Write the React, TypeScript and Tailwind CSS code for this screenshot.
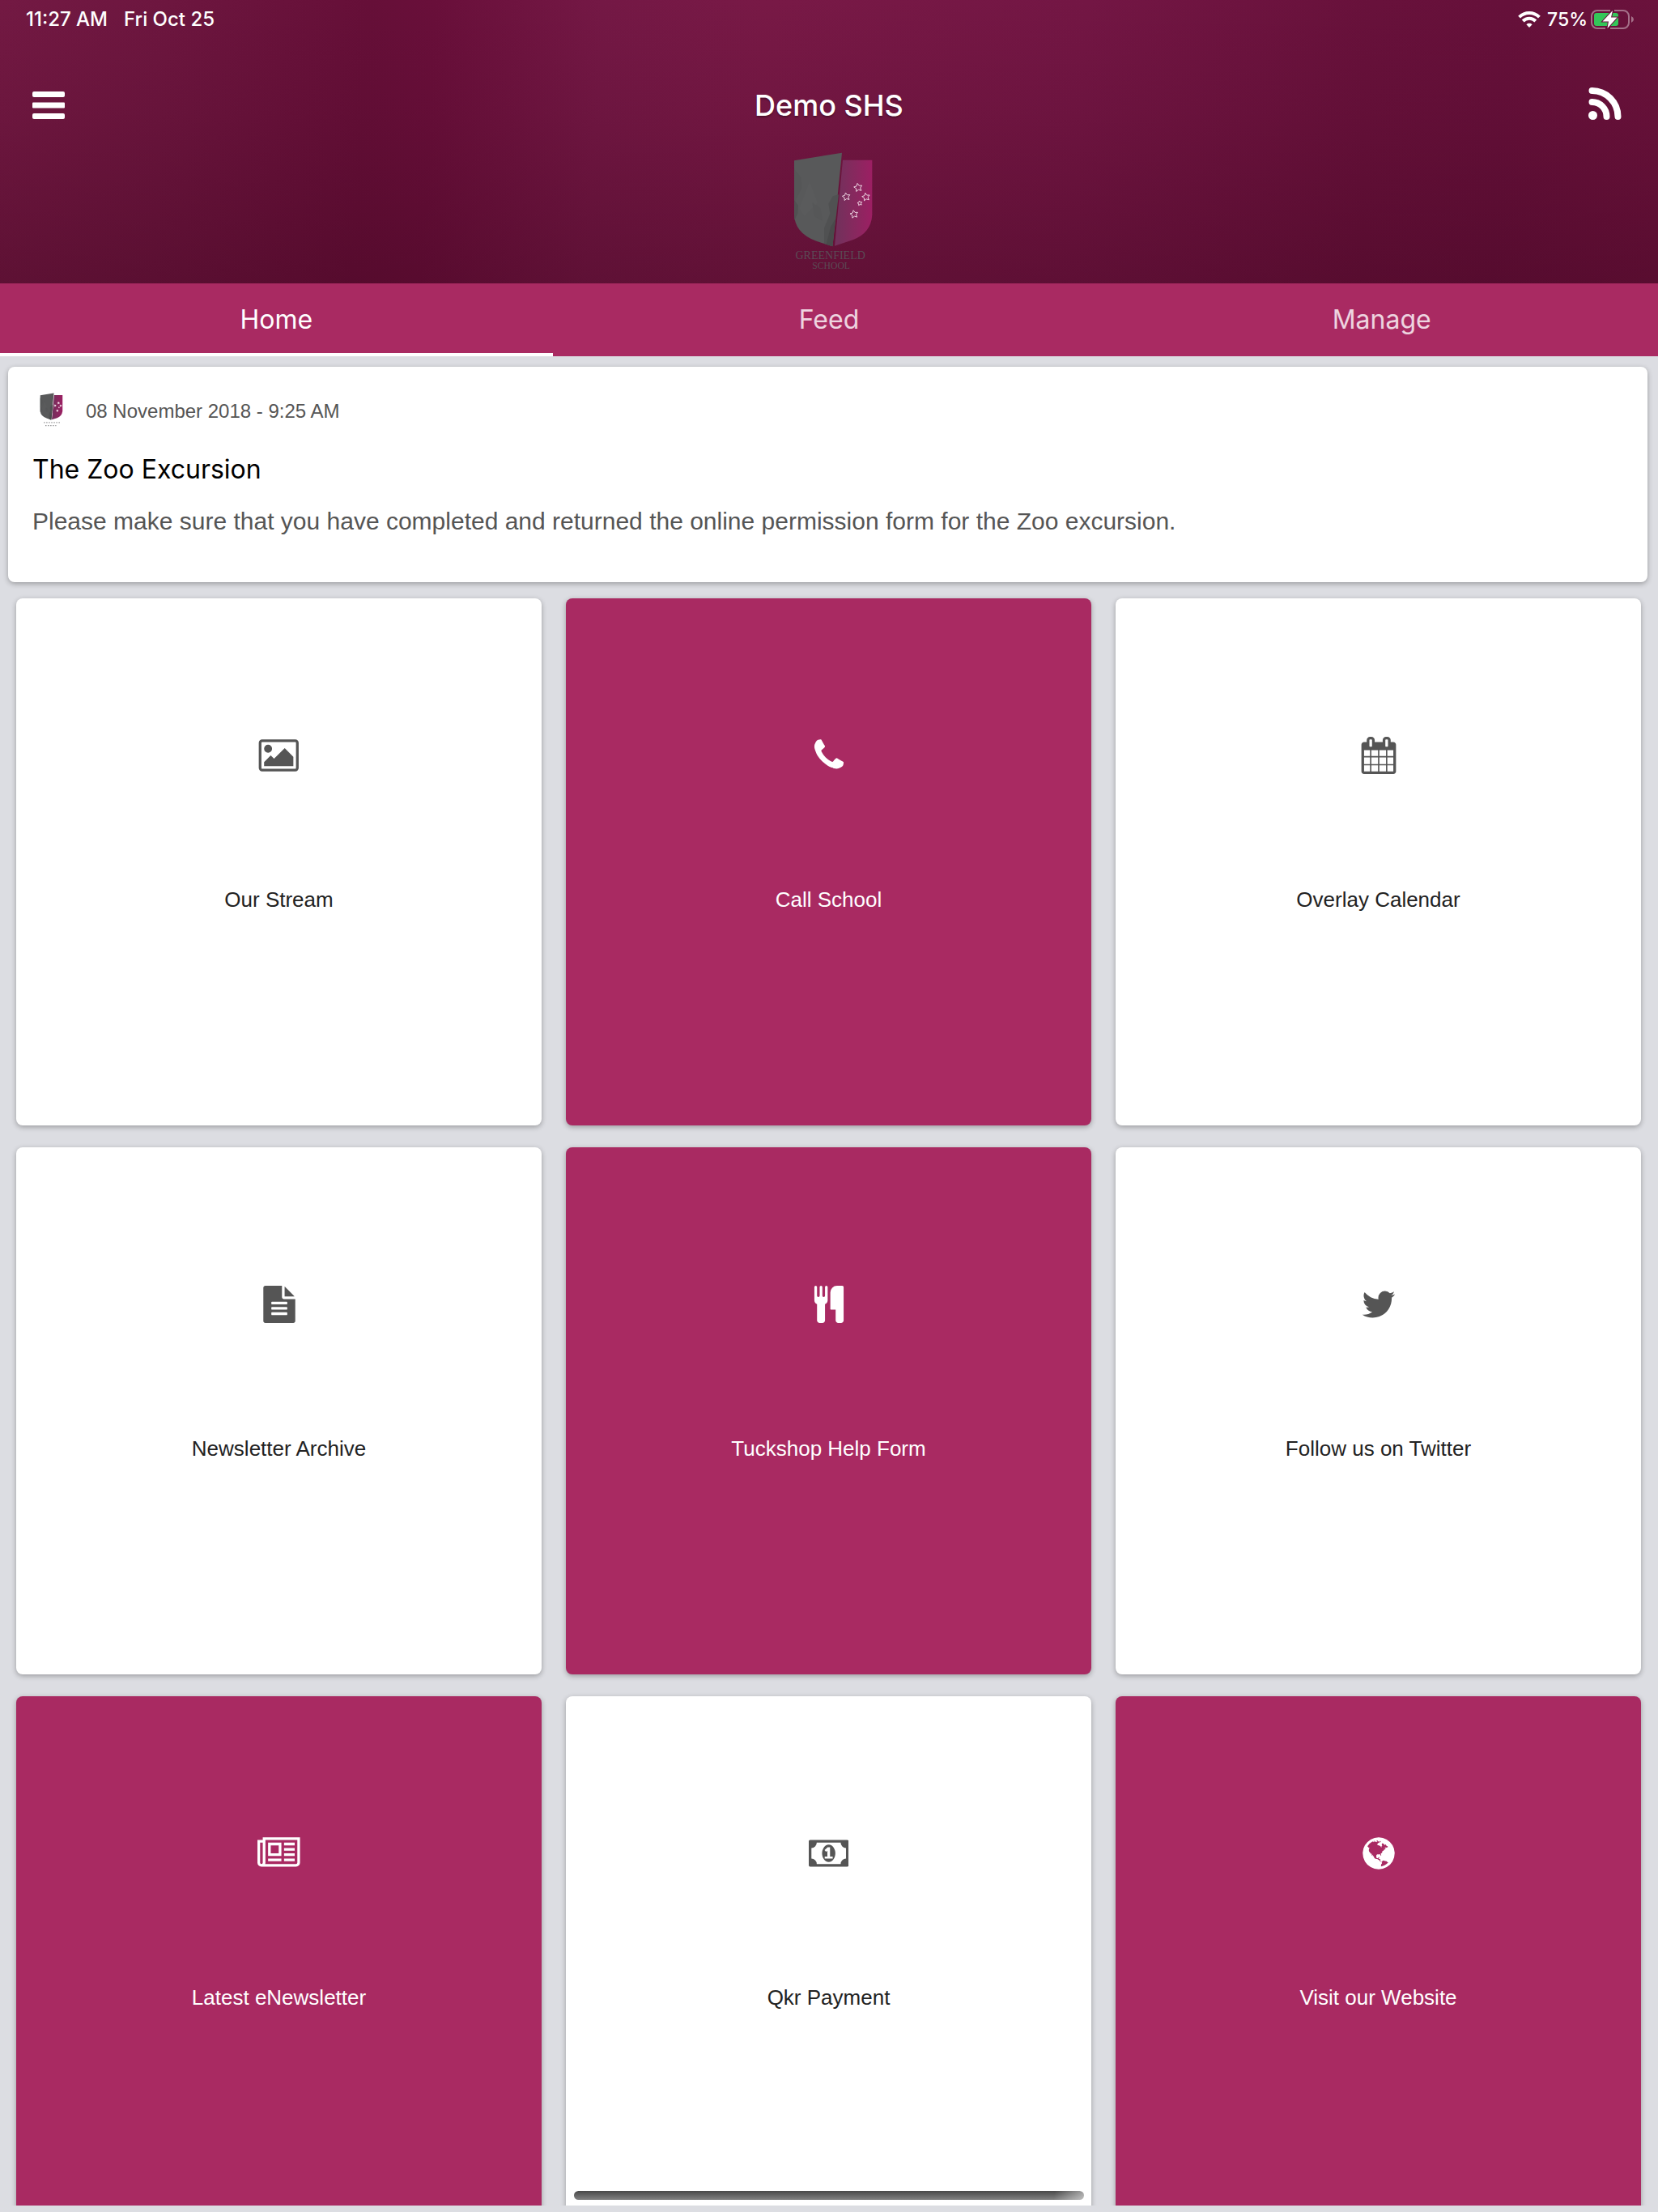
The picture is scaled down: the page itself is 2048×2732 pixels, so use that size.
import React from 'react';
import clsx from 'clsx';

type IconProps = {
  width: number;
  d: string;
};

type Tile = {
  label: string;
  icon: IconProps;
  accent?: boolean;
};

const icons: Record<string, IconProps> = {
  picture: {
    width: 2048,
    d: 'M704 576q0 80-56 136t-136 56-136-56-56-136 56-136 136-56 136 56 56 136zm1024 384v448h-1408v-192l320-320 160 160 512-512zm96-704h-1600q-13 0-22.5 9.5t-9.5 22.5v1216q0 13 9.5 22.5t22.5 9.5h1600q13 0 22.5-9.5t9.5-22.5v-1216q0-13-9.5-22.5t-22.5-9.5zm160 32v1216q0 66-47 113t-113 47h-1600q-66 0-113-47t-47-113v-1216q0-66 47-113t113-47h1600q66 0 113 47t47 113z',
  },
  phone: {
    width: 1792,
    d: 'M1600 1240q0 27-10 70.5t-21 68.5q-21 50-122 106-94 51-186 51-27 0-53-3.5t-57.5-12.5-47-14.5-55.5-20.5-49-18q-98-35-175-83-127-79-264-216t-216-264q-48-77-83-175-3-9-18-49t-20.5-55.5-14.5-47-12.5-57.5-3.5-53q0-92 51-186 56-101 106-122 25-11 68.5-21t70.5-10q14 0 21 3 18 6 53 76 11 19 30 54t35 63.5 31 53.5q3 4 17.5 25t21.5 35.5 7 28.5q0 20-28.5 50t-62 55-62 53-28.5 46q0 9 5 22.5t8.5 20.5 14 24 11.5 19q76 137 174 235t235 174q2 1 19 11.5t24 14 20.5 8.5 22.5 5q18 0 46-28.5t53-62 55-62 50-28.5q14 0 28.5 7t35.5 21.5 25 17.5q25 15 53.5 31t63.5 35 54 30q70 35 76 53 3 7 3 21z',
  },
  calendar: {
    width: 1792,
    d: 'M192 1664h288v-288h-288v288zm352 0h320v-288h-320v288zm-352-352h288v-320h-288v320zm352 0h320v-320h-320v320zm-352-384h288v-288h-288v288zm736 736h320v-288h-320v288zm-384-736h320v-288h-320v288zm768 736h288v-288h-288v288zm-384-352h320v-320h-320v320zm-352-864v-288q0-13-9.5-22.5t-22.5-9.5h-64q-13 0-22.5 9.5t-9.5 22.5v288q0 13 9.5 22.5t22.5 9.5h64q13 0 22.5-9.5t9.5-22.5zm736 864h288v-320h-288v320zm-384-384h320v-288h-320v288zm384 0h288v-288h-288v288zm32-480v-288q0-13-9.5-22.5t-22.5-9.5h-64q-13 0-22.5 9.5t-9.5 22.5v288q0 13 9.5 22.5t22.5 9.5h64q13 0 22.5-9.5t9.5-22.5zm384-64v1280q0 52-38 90t-90 38h-1408q-52 0-90-38t-38-90v-1280q0-52 38-90t90-38h128v-96q0-66 47-113t113-47h64q66 0 113 47t47 113v96h384v-96q0-66 47-113t113-47h64q66 0 113 47t47 113v96h128q52 0 90 38t38 90z',
  },
  file: {
    width: 1792,
    d: 'M1596 476q14 14 28 36h-472v-472q22 14 36 28zm-476 164h544v1056q0 40-28 68t-68 28h-1344q-40 0-68-28t-28-68v-1600q0-40 28-68t68-28h800v544q0 40 28 68t68 28zm160 736v-64q0-14-9-23t-23-9h-704q-14 0-23 9t-9 23v64q0 14 9 23t23 9h704q14 0 23-9t9-23zm0-256v-64q0-14-9-23t-23-9h-704q-14 0-23 9t-9 23v64q0 14 9 23t23 9h704q14 0 23-9t9-23zm0-256v-64q0-14-9-23t-23-9h-704q-14 0-23 9t-9 23v64q0 14 9 23t23 9h704q14 0 23-9t9-23z',
  },
  cutlery: {
    width: 1792,
    d: 'M832 64v640q0 61-35.5 111t-92.5 70v779q0 52-38 90t-90 38h-128q-52 0-90-38t-38-90v-779q-57-20-92.5-70t-35.5-111v-640q0-26 19-45t45-19 45 19 19 45v416q0 26 19 45t45 19 45-19 19-45v-416q0-26 19-45t45-19 45 19 19 45v416q0 26 19 45t45 19 45-19 19-45v-416q0-26 19-45t45-19 45 19 19 45zm768 0v1600q0 52-38 90t-90 38h-128q-52 0-90-38t-38-90v-512h-224q-13 0-22.5-9.5t-9.5-22.5v-800q0-132 94-226t226-94h256q26 0 45 19t19 45z',
  },
  twitter: {
    width: 1792,
    d: 'M1684 408q-67 98-162 167 1 14 1 42 0 130-38 259.5t-115.5 248.5-184.5 210.5-258 146-323 54.5q-271 0-496-145 35 4 78 4 225 0 401-138-105-2-188-64.5t-114-159.5q33 5 61 5 43 0 85-11-112-23-185.5-111.5t-73.5-205.5v-4q68 38 146 41-66-44-105-115t-39-154q0-88 44-163 121 149 294.5 238.5t371.5 99.5q-8-38-8-74 0-134 94.5-228.5t228.5-94.5q140 0 236 102 109-21 205-78-37 115-142 178 93-10 186-50z',
  },
  newspaper: {
    width: 2048,
    d: 'M1024 512h-384v384h384v-384zm128 640v128h-640v-128h640zm0-768v640h-640v-640h640zm640 768v128h-512v-128h512zm0-256v128h-512v-128h512zm0-256v128h-512v-128h512zm0-256v128h-512v-128h512zm-1536 960v-960h-128v960q0 26 19 45t45 19 45-19 19-45zm1664 0v-1088h-1536v1088q0 33-11 64h1483q26 0 45-19t19-45zm128-1216v1216q0 80-56 136t-136 56h-1664q-80 0-136-56t-56-136v-1088h256v-128h1792z',
  },
  money: {
    width: 1920,
    d: 'M768 1152h384v-96h-128v-448h-114l-148 137 77 80q42-37 55-57h2v288h-128v96zm512-256q0 70-21 142t-59.5 134-101.5 101-138 39-138-39-101.5-101-59.5-134-21-142 21-142 59.5-134 101.5-101 138-39 138 39 101.5 101 59.5 134 21 142zm512 256v-512q-106 0-181-75t-75-181h-1152q0 106-75 181t-181 75v512q106 0 181 75t75 181h1152q0-106 75-181t181-75zm128-832v1152q0 26-19 45t-45 19h-1792q-26 0-45-19t-19-45v-1152q0-26 19-45t45-19h1792q26 0 45 19t19 45z',
  },
  globe: {
    width: 1792,
    d: 'M896 128q209 0 385.5 103t279.5 279.5 103 385.5-103 385.5-279.5 279.5-385.5 103-385.5-103-279.5-279.5-103-385.5 103-385.5 279.5-279.5 385.5-103zm274 521q-2 1-9.5 9.5t-13.5 9.5q2 0 4.5-5t5-11 3.5-7q6-7 22-15 14-6 52-12 34-8 51 11-2-2 9.5-13t14.5-12q3-2 15-4.5t15-7.5l2-22q-12 1-17.5-7t-6.5-21q0 2-6 8 0-7-4.5-8t-11.5 1-9 1q-10-3-15-7.5t-8-16.5-4-15q-2-5-9.5-11t-9.5-10q-1-2-2.5-5.5t-3-6.5-4-5.5-5.5-2.5-7 5-7.5 10-4.5 5q-3-2-6-1.5t-4.5 1-4.5 3-5 3.5q-3 2-8.5 3t-8.5 2q15-5-1-11-10-4-16-3 9-4 7.5-12t-8.5-14h5q-1-4-8.5-8.5t-17.5-8.5-13-6q-8-5-34-9.5t-33-.5q-5 6-4.5 10.5t4 14 3.5 12.5q1 6-5.5 13t-6.5 12q0 7 14 15.5t10 21.5q-3 8-16 16t-16 12q-5 8-1.5 18.5t10.5 16.5q2 2 1.5 4t-3.5 4.5-5.5 4-6.5 3.5l-3 2q-11 5-20.5-6t-13.5-26q-7-25-16-30-23-8-29 1-5-13-41-26-25-9-58-4 6-1 0-15-7-15-19-12 3-6 4-17.5t1-13.5q3-13 12-23 1-1 7-8.5t9.5-13.5.5-6q35 4 50-11 5-5 11.5-17t10.5-17q9-6 14-5.5t14.5 5.5 14.5 5q14 1 15.5-11t-7.5-20q12 1 3-17-4-7-8-9-12-4-27 5-8 4 2 8-1-1-9.5 10.5t-16.5 17.5-16-5q-1-1-5.5-13.5t-9.5-13.5q-8 0-16 15 3-8-11-15t-24-8q19-12-8-27-7-4-20.5-5t-19.5 4q-5 7-5.5 11.5t5 8 10.5 5.5 11.5 4 8.5 3q14 10 8 14-2 1-8.5 3.5t-11.5 4.5-6 4q-3 4 0 14t-2 14q-5-5-9-17.5t-7-16.5q7 9-25 6l-10-1q-4 0-16 2t-20.5 1-13.5-8q-4-8 0-20 1-4 4-2-4-3-11-9.5t-10-8.5q-46 15-94 41 6 1 12-1 5-2 13-6.5t10-5.5q34-14 42-7l5-5q14 16 20 25-7-4-30-1-20 6-22 12 7 12 5 18-4-3-11.5-10t-14.5-11-15-5q-16 0-22 1-146 80-235 222 7 7 12 8 4 1 5 9t2.5 11 11.5-3q9 8 3 19 1-1 44 27 19 17 21 21 3 11-10 18-1-2-9-9t-9-4q-3 5 .5 18.5t10.5 12.5q-7 0-9.5 16t-2.5 35.5-1 23.5l2 1q-3 12 5.5 34.5t21.5 19.5q-13 3 20 43 6 8 8 9 3 2 12 7.5t15 10 10 10.5q4 5 10 22.5t14 23.5q-2 6 9.500 20t10.500 23q-1 0-2.500 1t-2.500 1q3 7 15.500 14t15.500 13q1 3 2 10t3 11 8 2q2-20-24-62-15-25-17-29-3-5-5.500-15.500t-4.500-14.500q2 0 6 1.500t8.500 3.500 7.500 4 2 3q-3 7 2 17.500t12 18.500 17 19 12 13q6 6 14 19.500t0 13.500q9 0 20 10.500t17 19.500q5 8 8 26t5 24q2 7 8.500 13.500t12.500 9.500l16 8 13 7q5 2 18.500 10.500t21.500 11.500q10 4 16 4t14.500-2.500 13.500-3.500q15-2 29 15t21 21q36 19 55 11-2 1 .5 7.500t8 15.500 9 14.500 5.500 8.500q5 6 18 15t18 15q6-4 7-9-3 8 7 20t18 10q14-3 14-32-31 15-49-18 0-1-2.500-5.500t-4-8.500-2.500-8.500 0-7.500 5-3q9 0 10-3.500t-2-12.500-4-13q-1-8-11-20t-12-15q-5 9-16 8t-16-9q0 1-1.500 5.500t-1.500 6.500q-13 0-15-1 1-3 2.500-17.500t3.500-22.500q1-4 5.500-12t7.500-14.500 4-12.500-4.500-9.500-17.500-2.500q-19 1-26 20-1 3-3 10.500t-5 11.500-9 7q-7 3-24 2t-24-5q-13-8-22.500-29t-9.500-37q0-10 2.500-26.500t3-25-5.500-24.500q3-2 9-9.500t10-10.500q2-1 4.500-1.500t4.500 0 4-1.500 3-6q-1-1-4-3-3-3-4-3 7 3 28.500-1.500t27.500 1.500q15 11 22-2 0-1-2.500-9.500t-.5-13.500q5 27 29 9 3 3 15.500 5t17.500 5q3 2 7 5.500t5.500 4.500 5-.5 8.500-6.500q10 14 12 24 11 40 19 44 7 3 11 2t4.500-9.500 0-14-1.500-12.500l-1-8v-18l-1-8q-15-3-18.500-12t1.500-18.500 15-18.500q1-1 8-3.500t15.500-6.500 12.500-8q21-19 15-35 7 0 11-9-1 0-5-3t-7.500-5-4.500-2q9-5 2-16 5-3 7.500-11t7.500-10q9 12 21 2 7-8 1-16 5-7 20.500-10.500t18.500-9.500q7 2 8-2t1-12 3-12q4-5 15-9t13-5l17-11q3-4 0-4 18 2 31-11 10-11-6-20 3-6-3-9.500t-15-5.500q3-1 11.500-.5t10.500-1.500q15-10-7-16-17-5-43 12zm-163 877q206-36 351-189-3-3-12.500-4.500t-12.500-3.500q-18-7-24-8 1-7-2.500-13t-8-9-12.500-8-11-7q-2-2-7-6t-7-5.500-7.500-4.500-8.500-2-10 1l-3 1q-3 1-5.500 2.500t-5.500 3-4 3 0 2.500q-21-17-36-22-5-1-11-5.500t-10.500-7-10-1.500-11.500 7q-5 5-6 15t-2 13q-7-5 0-17.500t2-18.500q-3-6-10.500-4.500t-12 4.500-11.500 8.500-9 6.500-8.500 5.500-8.500 7.500q-3 4-6 12t-5 11q-2-4-11.500-6.500t-9.500-5.500q2 10 4 35t5 38q7 31-12 48-27 25-29 40-4 22 12 26 0 7-8 20.500t-7 21.500q0 6 2 16z',
  },
};

const tabs = ['Home', 'Feed', 'Manage'];

const tiles: Tile[] = [
  { label: 'Our Stream', icon: icons.picture },
  { label: 'Call School', icon: icons.phone, accent: true },
  { label: 'Overlay Calendar', icon: icons.calendar },
  { label: 'Newsletter Archive', icon: icons.file },
  { label: 'Tuckshop Help Form', icon: icons.cutlery, accent: true },
  { label: 'Follow us on Twitter', icon: icons.twitter },
  { label: 'Latest eNewsletter', icon: icons.newspaper, accent: true },
  { label: 'Qkr Payment', icon: icons.money },
  { label: 'Visit our Website', icon: icons.globe, accent: true },
];

const TileIcon = ({ width, d }: IconProps) => (
  <svg viewBox={`0 0 ${width} 1792`} className="h-[46px] w-auto" fill="currentColor" aria-hidden="true">
    <path d={d} />
  </svg>
);

const stars = [
  { x: 480, y: 424, r: 16 },
  { x: 436, y: 458, r: 15 },
  { x: 509, y: 459, r: 15 },
  { x: 486, y: 482, r: 9 },
  { x: 465, y: 523, r: 15 },
];

const starPoints = (x: number, y: number, r: number) =>
  Array.from({ length: 10 }, (_, i) => {
    const radius = i % 2 ? r * 0.5 : r;
    const angle = (i * Math.PI) / 5 - 1.75;
    return `${x + radius * Math.cos(angle)},${y + radius * Math.sin(angle)}`;
  }).join(' ');

const Crest = ({ className, small }: { className: string; small?: boolean }) => {
  const gradient = small ? 'crest-small' : 'crest-large';

  return (
    <svg viewBox="204 290 336 441" className={className} role="img" aria-label="Greenfield School">
      <defs>
        <linearGradient id={gradient}>
          <stop offset="0.1" stopColor="#74305c" />
          <stop offset="0.5" stopColor="#86295e" />
          <stop offset="1" stopColor="#9c1f63" />
        </linearGradient>
      </defs>
      <path d="M243 324L420 295L385 642L325 622Q243 592 243 520Z" fill="#58595a" />
      <path d="M243 355L268 385L272 425L243 480Z" fill="#555657" />
      <path d="M243 470L258 490L256 520L244 545Z" fill="#505152" />
      <path d="M300 400L330 480L280 530L262 500Z" fill="#5a5b5c" />
      <path d="M310 480L340 500L348 548L318 530Z" fill="#565758" />
      <path d="M408 450L385 642L354 632L354 574L376 520L370 484L386 456Z" fill="#505152" />
      <path d="M396 540L385 642L362 634L378 570Z" fill="#494a4b" />
      <path d="M423 322H532V525Q528 592 462 617L393 640Z" fill={`url(#${gradient})`} />
      {stars.map((star) => (
        <polygon
          key={`${star.x}-${star.y}`}
          points={starPoints(star.x, star.y, star.r)}
          fill={small ? '#fff' : 'none'}
          stroke="#ecd5e2"
          strokeWidth="3"
        />
      ))}
      {small ? (
        <g stroke="#8a8a8c" strokeWidth="14" strokeDasharray="14 18">
          <path d="M290 678H500" />
          <path d="M310 716H450" />
        </g>
      ) : (
        <g fill="#5b4b55" textAnchor="middle" className="font-['Liberation_Serif',serif]">
          <text x="377" y="689" fontSize="42">
            GREENFIELD
          </text>
          <text x="380" y="725" fontSize="35">
            SCHOOL
          </text>
        </g>
      )}
    </svg>
  );
};

const StatusBar = () => (
  <div className="flex h-12 items-center justify-between pr-[30px] pl-8 font-['Inter',sans-serif] text-2xl font-medium">
    <div className="flex gap-5">
      <span>11:27 AM</span>
      <span>Fri Oct 25</span>
    </div>
    <div className="flex items-center">
      <svg viewBox="0 0 28 20" className="mr-2 h-5 w-7" aria-label="Wi-Fi">
        <g fill="none" stroke="currentColor" strokeWidth="4">
          <path d="M1.6 7.2a17.6 17.6 0 0 1 24.8 0" />
          <path d="M6.2 12a11 11 0 0 1 15.6 0" />
        </g>
        <path d="M14 20l-3.6-3.8a5.2 5.2 0 0 1 7.2 0z" fill="currentColor" />
      </svg>
      <span className="mr-1 text-[23px]">75%</span>
      <svg viewBox="0 0 53 24" className="h-6 w-[53px]" aria-label="Battery charging">
        <path
          d="M24 1H8a7 7 0 0 0-7 7v8a7 7 0 0 0 7 7h10M29 1h11a7 7 0 0 1 7 7v8a7 7 0 0 1-7 7H24"
          fill="none"
          stroke="#fff"
          strokeOpacity="0.4"
          strokeWidth="2"
        />
        <path d="M50 8q3 1.5 3 4t-3 4z" fill="#fff" fillOpacity="0.4" />
        <rect x="4" y="4" width="30" height="16" rx="3" fill="#34c759" />
        <path
          d="M27 1L14.5 14.5h7.5L20.500 23L32.500 9.500h-7.500z"
          fill="#fff"
          stroke="#65103a"
          strokeWidth="2"
          paintOrder="stroke"
        />
      </svg>
    </div>
  </div>
);

const Header = () => (
  <header className="shrink-0 bg-[linear-gradient(to_bottom,rgba(60,4,28,0)_0%,rgba(60,4,28,0.12)_40%,rgba(60,4,28,0.38)_100%),linear-gradient(93deg,#731943_0%,#6d163f_10%,#660f38_22%,#690f3a_26%,#741845_36%,#781946_46%,#731644_65%,#68113b_82%,#66103a_90%,#6b123c_100%)] pb-4 text-white">
    <StatusBar />
    <div className="mt-12 grid h-[68px] grid-cols-3 items-center px-10">
      <button type="button" aria-label="Menu" className="justify-self-start">
        <svg viewBox="0 0 40 34" className="h-[34px] w-10" fill="currentColor">
          <rect width="40" height="7" rx="2" />
          <rect y="13.500" width="40" height="7" rx="1" />
          <rect y="27" width="40" height="7" rx="2" />
        </svg>
      </button>
      <h1 className="text-center font-['Inter',sans-serif] text-4xl font-medium [text-shadow:0_2px_2px_rgba(0,0,0,0.3)]">
        Demo SHS
      </h1>
      <button type="button" aria-label="RSS feed" className="mr-1 justify-self-end pb-1">
        <svg viewBox="0 0 42 40" className="h-10 w-[42px]" fill="none" stroke="currentColor" strokeWidth="8" strokeLinecap="round">
          <path d="M4.500 4A32 32 0 0 1 36.500 36" />
          <path d="M4.500 18A18 18 0 0 1 22.500 36" />
          <circle cx="5.500" cy="34.500" r="5.500" fill="currentColor" stroke="none" />
        </svg>
      </button>
    </div>
    <Crest className="mx-auto mt-[23px] h-[147px] w-28" />
  </header>
);

const App = () => {
  return (
    <div className="flex h-screen flex-col bg-[#dcdde2] pb-2 font-['Liberation_Sans',sans-serif]">
      <Header />

      <nav className="grid shrink-0 grid-cols-3 bg-[#a92a62] font-['Inter',sans-serif] text-[32px]">
        {tabs.map((tab, index) => (
          <button
            key={tab}
            type="button"
            className={clsx(
              'h-[90px] border-t-4 border-b-4 border-t-transparent',
              index === 0 ? 'border-b-white text-white' : 'border-b-transparent text-white/80',
            )}
          >
            {tab}
          </button>
        ))}
      </nav>

      <main className="min-h-0 flex-1 overflow-y-auto pt-[13px] [scrollbar-width:none]">
        <article className="mr-[13px] ml-[10px] h-[266px] rounded-lg bg-white px-[30px] pt-8 shadow-[0_2px_6px_rgba(0,0,0,0.3)]">
          <div className="flex h-[46px] items-center gap-7">
            <Crest small className="mb-1 ml-[6px] h-[42px] w-8" />
            <time className="text-2xl text-[#555]">08 November 2018 - 9:25 AM</time>
          </div>
          <h2 className="mt-[25px] font-['Inter',sans-serif] text-[32px] leading-[48px] text-black">
            The Zoo Excursion
          </h2>
          <p className="mt-5 text-[30px] leading-10 text-[#555]">
            Please make sure that you have completed and returned the online permission form for the Zoo excursion.
          </p>
        </article>

        <div className="mt-5 grid grid-cols-3 gap-x-[30px] gap-y-[27px] pr-[21px] pb-5 pl-5">
          {tiles.map(({ label, icon, accent }) => (
            <a
              key={label}
              href="#"
              className={clsx(
                'flex aspect-[649/651] flex-col items-center rounded-lg pt-[171px] shadow-[0_2px_6px_rgba(0,0,0,0.3)]',
                accent ? 'bg-[#a92a62] text-white' : 'bg-white text-[#555]',
              )}
            >
              <TileIcon {...icon} />
              <span className={clsx('mt-[139px] text-[26px] leading-8', !accent && 'text-[#222]')}>{label}</span>
            </a>
          ))}
        </div>
      </main>

      <div className="fixed bottom-[15px] left-1/2 h-[11px] w-[630px] -translate-x-1/2 rounded-full bg-[linear-gradient(100deg,transparent_94%,rgba(255,255,255,0.5)_100%),linear-gradient(#484848,#828282)]" />
    </div>
  );
};

export default App;
